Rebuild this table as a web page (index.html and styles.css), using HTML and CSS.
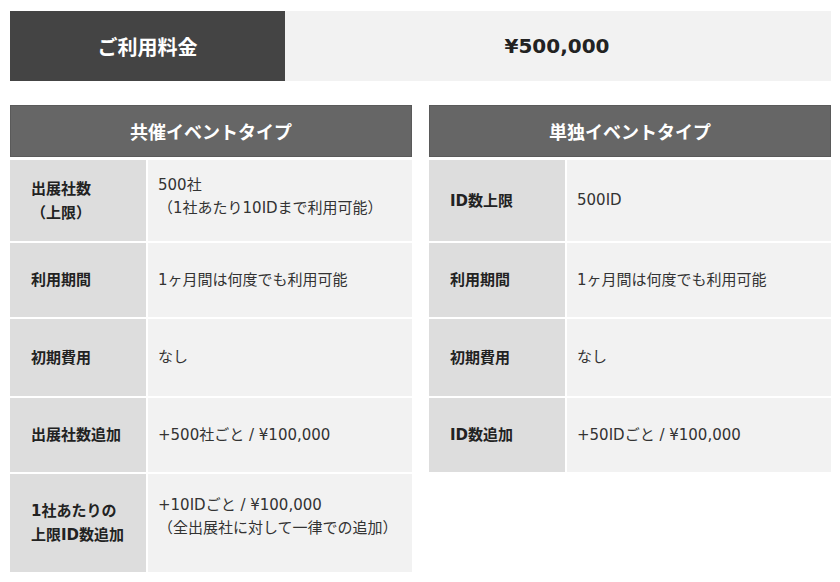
FILE: index.html
```html
<!DOCTYPE html>
<html lang="ja">
<head>
<meta charset="utf-8">
<title>ご利用料金</title>
<link rel="stylesheet" href="styles.css">
</head>
<body>
<div class="page">
  <div class="fee">
    <div class="fee-label">ご利用料金</div>
    <div class="fee-value">¥500,000</div>
  </div>
  <div class="plans">
    <section class="plan">
      <h2 class="plan-head">共催イベントタイプ</h2>
      <div class="rows">
        <div class="row row--h81">
          <div class="label">出展社数<br>（上限）</div>
          <div class="value value--lift8">500社<br>（1社あたり10IDまで利用可能）</div>
        </div>
        <div class="row row--h74">
          <div class="label">利用期間</div>
          <div class="value">1ヶ月間は何度でも利用可能</div>
        </div>
        <div class="row row--h77">
          <div class="label">初期費用</div>
          <div class="value">なし</div>
        </div>
        <div class="row row--h74">
          <div class="label">出展社数追加</div>
          <div class="value">+500社ごと / ¥100,000</div>
        </div>
        <div class="row row--h98">
          <div class="label">1社あたりの<br>上限ID数追加</div>
          <div class="value value--lift12">+10IDごと / ¥100,000<br>（全出展社に対して一律での追加）</div>
        </div>
      </div>
    </section>
    <section class="plan">
      <h2 class="plan-head">単独イベントタイプ</h2>
      <div class="rows">
        <div class="row row--h81">
          <div class="label">ID数上限</div>
          <div class="value">500ID</div>
        </div>
        <div class="row row--h74">
          <div class="label">利用期間</div>
          <div class="value">1ヶ月間は何度でも利用可能</div>
        </div>
        <div class="row row--h77">
          <div class="label">初期費用</div>
          <div class="value">なし</div>
        </div>
        <div class="row row--h74">
          <div class="label">ID数追加</div>
          <div class="value">+50IDごと / ¥100,000</div>
        </div>
      </div>
    </section>
  </div>
</div>
</body>
</html>
```

FILE: styles.css
```css
* { box-sizing: border-box; }
html, body { margin: 0; padding: 0; background: #fff; }
body {
  font-family: "DejaVu Sans", "Noto Sans CJK JP", sans-serif;
  color: #333;
}
.page {
  width: 840px;
  padding: 11px 9px 0 10px;
}
.fee {
  display: flex;
  height: 70px;
}
.fee-label {
  width: 275px;
  background: #444;
  color: #fff;
  font-size: 20px;
  font-weight: bold;
  display: flex;
  align-items: center;
  justify-content: center;
}
.fee-value {
  flex: 1;
  background: #f2f2f2;
  color: #222;
  font-size: 20px;
  font-weight: bold;
  display: flex;
  align-items: center;
  justify-content: center;
  padding-right: 2px;
}
.plans {
  display: flex;
  gap: 17px;
  margin-top: 24px;
  align-items: flex-start;
}
.plan {
  width: 402px;
}
.plan-head {
  margin: 0;
  height: 52px;
  background: #666;
  border: 1px solid #5a5a5a;
  color: #fff;
  font-size: 18px;
  font-weight: bold;
  display: flex;
  align-items: center;
  justify-content: center;
  padding-bottom: 1px;
}
.rows {
  margin-top: 3px;
  display: flex;
  flex-direction: column;
  gap: 2px;
}
.row {
  display: flex;
  gap: 2px;
}
.row--h81 { height: 81px; }
.row--h74 { height: 74px; }
.row--h77 { height: 77px; }
.row--h98 { height: 98px; }
.label {
  width: 136px;
  flex: none;
  background: #dddddd;
  color: #222;
  font-size: 15px;
  font-weight: bold;
  line-height: 24px;
  padding-left: 21px;
  display: flex;
  flex-direction: column;
  justify-content: center;
}
.value {
  flex: 1;
  background: #f2f2f2;
  color: #333;
  font-size: 15px;
  line-height: 23px;
  padding-left: 10px;
  display: flex;
  flex-direction: column;
  justify-content: center;
}
.value--lift8 { padding-bottom: 8px; }
.value--lift12 { padding-bottom: 12px; }
```
